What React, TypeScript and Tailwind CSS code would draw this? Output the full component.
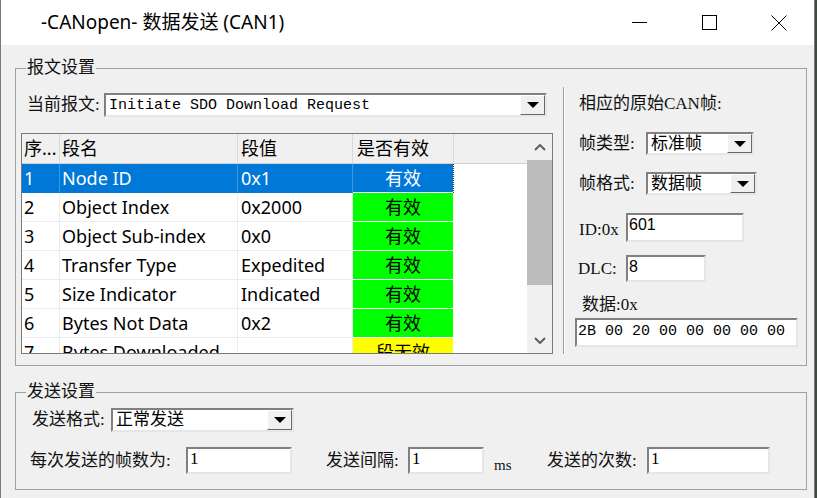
import React from 'react';

const song = "font-['Liberation_Serif','Noto_Sans_CJK_SC',serif]";
const ya = "font-['Noto_Sans','Noto_Sans_CJK_SC',sans-serif]";

function Sunken({ className = '', children }: { className?: string; children?: React.ReactNode }) {
  return (
    <div
      className={`bg-white border-2 border-t-[#808080] border-l-[#808080] border-r-[#e6e6e6] border-b-[#e6e6e6] ${className}`}
    >
      {children}
    </div>
  );
}

function Combo({ className = '', text, textClass = '' }: { className?: string; text: string; textClass?: string }) {
  return (
    <Sunken className={`flex items-stretch ${className}`}>
      <div className={`flex-1 pl-[3px] flex items-center text-black whitespace-nowrap overflow-hidden ${textClass}`}>
        {text}
      </div>
      <div className="w-[25px] flex items-center justify-center bg-[#f0f0f0] border border-t-white border-l-white border-r-[#696969] border-b-[#696969]">
        <div className="w-0 h-0 border-l-[6px] border-r-[6px] border-t-[6px] border-l-transparent border-r-transparent border-t-black" />
      </div>
    </Sunken>
  );
}

const rows = [
  { no: '1', name: 'Node ID', value: '0x1', ok: true },
  { no: '2', name: 'Object Index', value: '0x2000', ok: true },
  { no: '3', name: 'Object Sub-index', value: '0x0', ok: true },
  { no: '4', name: 'Transfer Type', value: 'Expedited', ok: true },
  { no: '5', name: 'Size Indicator', value: 'Indicated', ok: true },
  { no: '6', name: 'Bytes Not Data', value: '0x2', ok: true },
  { no: '7', name: 'Bytes Downloaded', value: '', ok: false },
];

function Chevron({ down = false }: { down?: boolean }) {
  return (
    <svg width="12" height="7" viewBox="0 0 12 7">
      <path
        d={down ? 'M1 1 L6 6 L11 1' : 'M1 6 L6 1 L11 6'}
        stroke="#606060"
        strokeWidth="2"
        fill="none"
      />
    </svg>
  );
}

function FieldTable() {
  return (
    <div className="mt-[16px] h-[221px] w-[532px] border border-[#7a7a7a] flex bg-white">
      <div className={`w-[505px] flex flex-col overflow-hidden ${ya} text-[18px]`}>
        {/* 表头 */}
        <div className="h-[30px] shrink-0 flex bg-[#f0f0f0] border-b border-[#d0d0d0] leading-[29px] text-black">
          <div className="w-[38px] pl-[2px] border-r border-[#d9d9d9] whitespace-nowrap overflow-hidden">序...</div>
          <div className="w-[178px] pl-[2px] border-r border-[#d9d9d9]">段名</div>
          <div className="w-[115px] pl-[3px] border-r border-[#d9d9d9]">段值</div>
          <div className="w-[101px] pl-[4px] border-r border-[#d9d9d9]">是否有效</div>
          <div className="flex-1" />
        </div>
        {rows.map((r, i) => {
          const sel = i === 0;
          const cell = sel
            ? 'bg-[#0078d7] text-white border-r border-b border-r-[#3f95de] border-b-[#0078d7]'
            : 'text-black border-r border-b border-[#ececec]';
          return (
            <div key={r.no} className="h-[29px] shrink-0 flex leading-[28px]">
              <div className={`w-[38px] pl-[2px] ${cell}`}>{r.no}</div>
              <div className={`w-[178px] pl-[2px] whitespace-nowrap ${cell}`}>{r.name}</div>
              <div className={`w-[115px] pl-[3px] ${cell}`}>{r.value}</div>
              <div
                className={`w-[100px] text-center border-b border-white ${
                  sel ? 'bg-[#0078d7] text-white' : r.ok ? 'bg-[#00ff00] text-black' : 'bg-[#ffff00] text-black'
                }`}
              >
                {r.ok ? '有效' : '段无效'}
              </div>
              <div className={`flex-1 ${sel ? 'border-l border-dotted border-[#333]' : ''}`} />
            </div>
          );
        })}
      </div>
      {/* 滚动条 */}
      <div className="w-[25px] flex flex-col bg-[#f0f0f0]">
        <div className="h-[26px] flex items-center justify-center">
          <Chevron />
        </div>
        <div className="h-[125px] bg-[#bcbcbc]" />
        <div className="flex-1" />
        <div className="h-[26px] flex items-center justify-center">
          <Chevron down />
        </div>
      </div>
    </div>
  );
}

export default function App() {
  return (
    <div className="w-[817px] h-[498px] bg-[#3c4a40] overflow-hidden">
      <div className="w-[815px] h-[498px] bg-[#f0f0f0] border-x border-[#7a7a7a] flex flex-col">
        {/* 标题栏 */}
        <div className="h-[45px] shrink-0 bg-white flex items-center">
          <div className={`pl-[40px] text-[19px] text-black ${ya}`}>-CANopen- 数据发送 (CAN1)</div>
          <div className="ml-auto flex">
            <div className="w-[70px] h-[45px] flex items-center justify-center">
              <svg width="15" height="15" viewBox="0 0 15 15">
                <path d="M0 7.5 H15" stroke="#000" strokeWidth="1" />
              </svg>
            </div>
            <div className="w-[70px] h-[45px] flex items-center justify-center">
              <svg width="15" height="15" viewBox="0 0 15 15">
                <rect x="0.5" y="0.5" width="14" height="14" stroke="#000" strokeWidth="1" fill="none" />
              </svg>
            </div>
            <div className="w-[70px] h-[45px] flex items-center justify-center">
              <svg width="16" height="16" viewBox="0 0 16 16">
                <path d="M0.5 0.5 L15.5 15.5 M15.5 0.5 L0.5 15.5" stroke="#000" strokeWidth="1" />
              </svg>
            </div>
          </div>
        </div>

        <div className={`${song} text-[17px] text-[#111]`}>
          {/* 报文设置 */}
          <fieldset className="ml-[14px] mt-[13px] w-[792px] h-[308px] border border-[#a0a0a0] min-w-0">
            <legend className="ml-[10px] px-[1px] leading-[20px]">报文设置</legend>
            <div className="flex">
              <div className="ml-[5px] w-[532px]">
                <div className="mt-[15px] h-[24px] flex items-center">
                  <div className="w-[83px] pl-[6px] whitespace-nowrap">当前报文:</div>
                  <Combo
                    className="w-[443px] h-[24px]"
                    text="Initiate SDO Download Request"
                    textClass="font-['Liberation_Mono',monospace] text-[15px] pt-[2px]"
                  />
                </div>
                <FieldTable />
              </div>

              <div className="ml-[10px] mt-[9px] h-[267px] w-[242px] border-l border-[#a0a0a0] shadow-[inset_1px_0_0_#ffffff] pl-[15px] flex flex-col">
                <div className="mt-[7px] leading-[20px] whitespace-nowrap">相应的原始CAN帧:</div>
                <div className="mt-[18px] h-[23px] flex items-center">
                  <div className="w-[67px] whitespace-nowrap">帧类型:</div>
                  <Combo className="w-[108px] h-[23px]" text="标准帧" />
                </div>
                <div className="mt-[17px] h-[23px] flex items-center">
                  <div className="w-[67px] whitespace-nowrap">帧格式:</div>
                  <Combo className="w-[111px] h-[23px]" text="数据帧" />
                </div>
                <div className="mt-[18px] h-[29px] flex items-center">
                  <div className="w-[47px] pt-[5px] whitespace-nowrap">ID:0x</div>
                  <Sunken className="w-[118px] h-[29px] pl-[1px] leading-[20px] font-['Liberation_Sans',sans-serif] text-[16px] text-black">
                    601
                  </Sunken>
                </div>
                <div className="mt-[13px] h-[27px] flex items-center">
                  <div className="-ml-[1px] w-[48px] whitespace-nowrap">DLC:</div>
                  <Sunken className="w-[80px] h-[27px] pl-[1px] leading-[20px] font-['Liberation_Sans',sans-serif] text-[16px] text-black">
                    8
                  </Sunken>
                </div>
                <div className="mt-[13px] pl-[3px] leading-[20px] whitespace-nowrap">数据:0x</div>
                <Sunken className="mt-[3px] -ml-[4px] w-[223px] h-[29px] pl-[1px] flex items-center font-['Liberation_Mono',monospace] text-[15px] text-black whitespace-pre">
                  2B 00 20 00 00 00 00 00
                </Sunken>
              </div>
            </div>
          </fieldset>

          {/* 发送设置 */}
          <fieldset className="ml-[14px] mt-[16px] w-[792px] h-[108px] border border-[#a0a0a0] min-w-0">
            <legend className="ml-[10px] px-[1px] leading-[20px]">发送设置</legend>
            <div className="mt-[6px] h-[24px] flex items-center pl-[16px]">
              <div className="w-[79px] whitespace-nowrap">发送格式:</div>
              <Combo className="w-[183px] h-[24px]" text="正常发送" />
            </div>
            <div className="mt-[15px] h-[27px] flex items-center pl-[14px]">
              <div className="w-[156px] whitespace-nowrap">每次发送的帧数为:</div>
              <Sunken className="w-[106px] h-[27px] pl-[2px] leading-[20px] text-black">1</Sunken>
              <div className="ml-[34px] w-[82px] whitespace-nowrap">发送间隔:</div>
              <Sunken className="w-[76px] h-[27px] pl-[2px] leading-[20px] text-black">1</Sunken>
              <div className="ml-[10px] w-[53px] pt-[10px] text-[15px]">ms</div>
              <div className="w-[100px] whitespace-nowrap">发送的次数:</div>
              <Sunken className="w-[123px] h-[27px] pl-[2px] leading-[20px] text-black">1</Sunken>
            </div>
          </fieldset>
        </div>
      </div>
    </div>
  );
}
